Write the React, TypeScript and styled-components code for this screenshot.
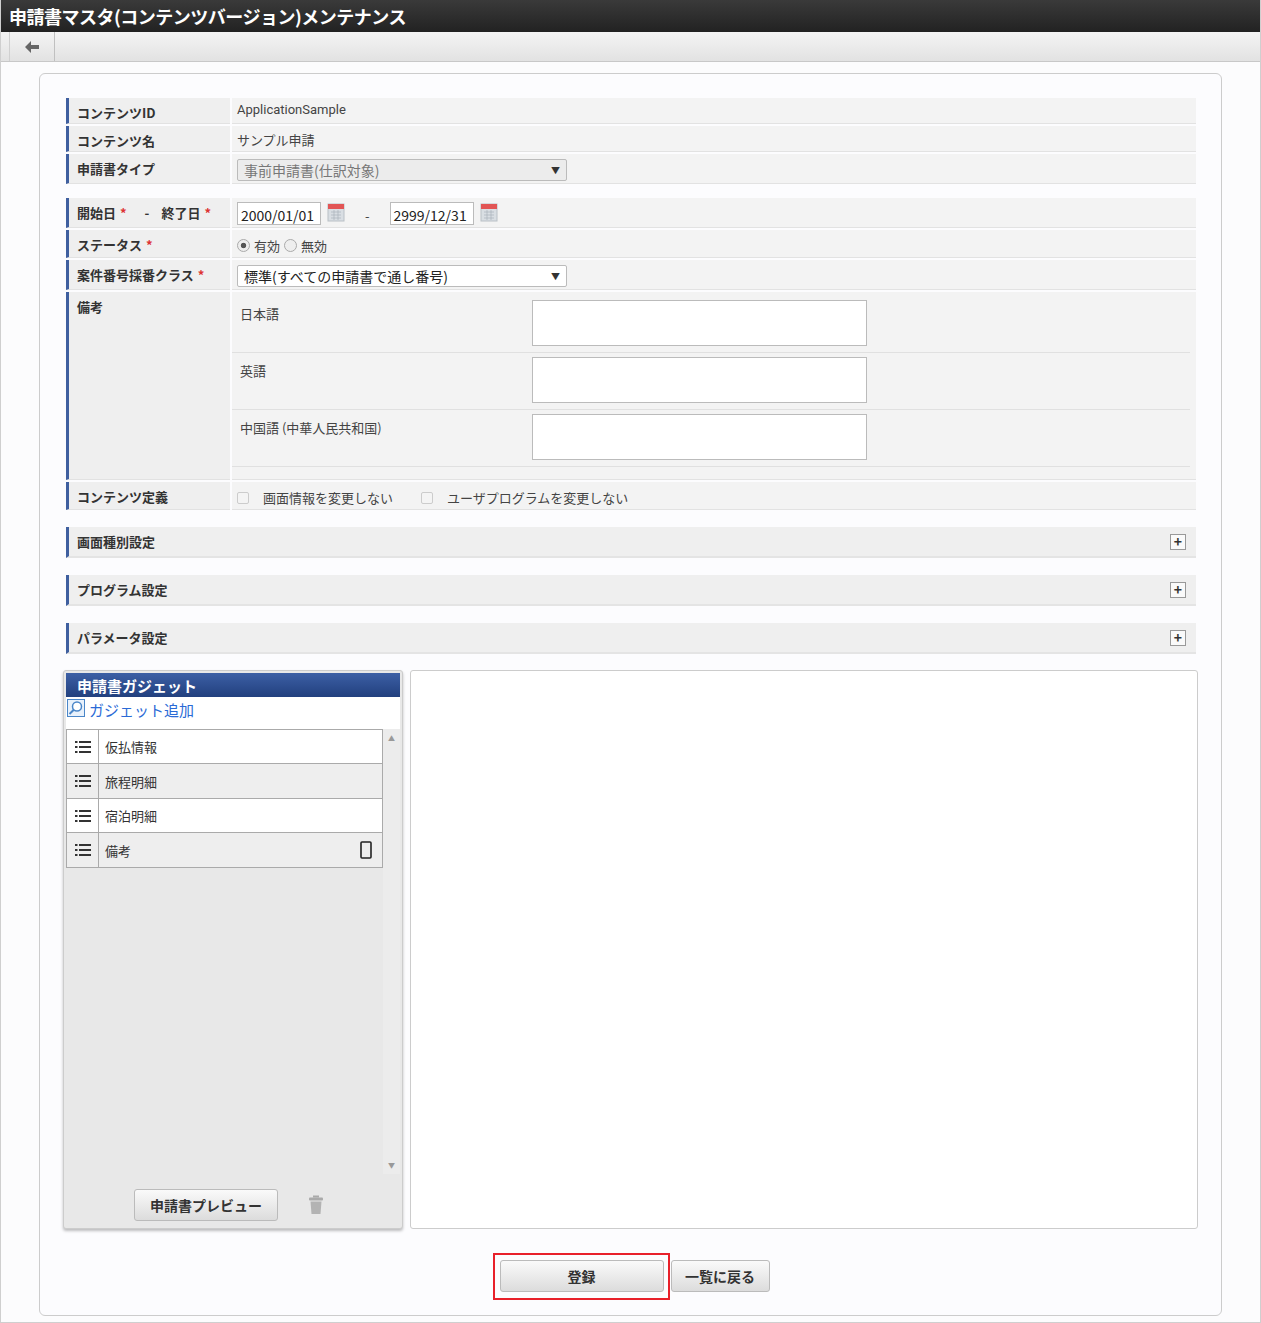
import styled, { createGlobalStyle } from "styled-components";

const Global = createGlobalStyle`
  body { margin: 0; font-family: "Noto Sans CJK JP", "Liberation Sans", sans-serif; font-size: 13px; color: #333; background: #fff; }
`;

const Page = styled.div`
  width: 1261px;
  height: 1323px;
  box-sizing: border-box;
  border: 1px solid #cfcfcf;
  border-top: none;
  background: #fcfcfd;
`;

const TitleBar = styled.div`
  height: 32px;
  background: linear-gradient(#3a3a3a, #222);
  color: #fff;
  font-weight: bold;
  font-size: 18px;
  line-height: 32px;
  padding-left: 8px;
  letter-spacing: -0.5px;
`;

const Toolbar = styled.div`
  height: 29px;
  display: flex;
  background: linear-gradient(#f4f4f4, #e2e2e2);
  border-bottom: 1px solid #c8c8c8;
`;

const BackBtn = styled.div`
  width: 44px;
  margin-left: 8px;
  border-left: 1px solid #d0d0d0;
  border-right: 1px solid #c0c0c0;
  display: flex;
  align-items: center;
  justify-content: center;
  color: #666;
`;

const Card = styled.div`
  margin: 11px 38px 0 38px;
  height: 1243px;
  box-sizing: border-box;
  border: 1px solid #ccc;
  border-radius: 6px;
  background: #fcfcfe;
  padding: 24px 25px 0 26px;
`;

const Table = styled.div`
  display: flex;
  flex-direction: column;
  gap: 2px;
`;

const Row = styled.div<{ h: number }>`
  display: flex;
  height: ${(p) => p.h}px;
  gap: 2px;
`;

const Label = styled.div`
  width: 164px;
  background: #efefef;
  border-left: 3px solid #3f5f9f;
  padding: 5px 0 0 8px;
  font-size: 13px;
  font-weight: bold;
  color: #333;
  box-sizing: border-box;
  border-bottom: 1px solid #e2e2e2;
  flex-shrink: 0;
`;

const Value = styled.div`
  flex: 1;
  background: #f3f3f3;
  border-bottom: 1px solid #e2e2e2;
  padding: 4px 0 0 5px;
  display: flex;
  align-items: flex-start;
  gap: 6px;
  font-size: 13px;
  color: #444;
`;

const Req = styled.span`
  color: #d33;
  margin-left: 4px;
`;

const Select = styled.div<{ disabled?: boolean }>`
  width: 330px;
  height: 22px;
  box-sizing: border-box;
  border: 1px solid #bbb;
  border-radius: 2px;
  background: ${(p) => (p.disabled ? "#ececec" : "#fff")};
  color: ${(p) => (p.disabled ? "#777" : "#222")};
  font-size: 14px;
  padding: 1px 6px;
  display: flex;
  justify-content: space-between;
  align-items: center;
  margin-top: 1px;
  &::after { content: "▼"; font-size: 9px; color: #333; }
`;

const DateInput = styled.div`
  width: 84px;
  height: 23px;
  box-sizing: border-box;
  border: 1px solid #bbb;
  background: #fff;
  font-size: 14px;
  padding: 2px 3px;
  color: #222;
`;

const Cal = () => (
  <svg width="18" height="20" viewBox="0 0 18 20">
    <rect x="1" y="2" width="16" height="17" fill="#d9dee3" stroke="#b9c0c6" />
    <rect x="1" y="2" width="16" height="5" fill="#e25555" />
    <path d="M4 10h10M4 13h10M4 16h10M7 8v10M11 8v10" stroke="#aab2ba" strokeWidth="0.7" />
  </svg>
);

const Dash = styled.span`
  margin: 0 14px;
  padding-top: 4px;
`;

const Radio = styled.span<{ on?: boolean }>`
  display: inline-block;
  width: 11px;
  height: 11px;
  border-radius: 50%;
  border: 1px solid #aaa;
  background: ${(p) => (p.on ? "radial-gradient(#555 30%, #eee 40%)" : "#eee")};
  margin-right: 4px;
  vertical-align: -1px;
`;

const Check = styled.span`
  display: inline-block;
  width: 10px;
  height: 10px;
  border: 1px solid #ccc;
  border-radius: 2px;
  background: #f4f4f4;
  margin-right: 14px;
  vertical-align: -1px;
`;

const NoteBox = styled.div`
  flex: 1;
  display: flex;
  flex-direction: column;
  padding: 4px 6px 0 0;
`;

const NoteRow = styled.div`
  display: flex;
  height: 57px;
  border-bottom: 1px solid #e0e0e0;
  padding: 4px 0 0 8px;
  box-sizing: border-box;
`;

const NoteLabel = styled.div`
  width: 292px;
  padding-top: 4px;
`;

const TextArea = styled.div`
  width: 335px;
  height: 46px;
  box-sizing: border-box;
  border: 1px solid #bbb;
  background: #fff;
`;

const Section = styled.div`
  height: 31px;
  margin-top: 17px;
  background: #efefef;
  border-left: 3px solid #3f5f9f;
  border-bottom: 2px solid #e4e4e4;
  display: flex;
  justify-content: space-between;
  align-items: center;
  padding: 0 10px 0 8px;
  font-weight: bold;
  font-size: 13px;
  box-sizing: border-box;
`;

const Plus = styled.span`
  width: 14px;
  height: 14px;
  border: 1px solid #999;
  background: #fafafa;
  font-size: 14px;
  line-height: 13px;
  text-align: center;
  font-weight: bold;
  color: #333;
`;

const Lower = styled.div`
  display: flex;
  gap: 7px;
  margin-top: 16px;
  margin-left: -3px;
  margin-right: -2px;
  height: 559px;
`;

const Gadget = styled.div`
  width: 340px;
  box-sizing: border-box;
  border: 1px solid #ccc;
  border-radius: 3px;
  background: #e8e8e8;
  box-shadow: 0 2px 3px rgba(0, 0, 0, 0.25);
  display: flex;
  flex-direction: column;
  padding: 2px;
`;

const GadgetHead = styled.div`
  height: 24px;
  background: linear-gradient(#3c5fa5, #22407e);
  color: #fff;
  font-weight: bold;
  font-size: 15px;
  padding-left: 11px;
  line-height: 25px;
`;

const AddLink = styled.div`
  background: #fff;
  color: #2a6ad6;
  font-size: 15px;
  height: 32px;
  display: flex;
  align-items: flex-start;
  gap: 4px;
  padding: 2px 0 0 1px;
  box-sizing: border-box;
`;

const ListArea = styled.div`
  flex: 1;
  display: flex;
`;

const List = styled.div`
  width: 318px;
  display: flex;
  flex-direction: column;
`;

const Item = styled.div<{ alt?: boolean }>`
  height: 35px;
  box-sizing: border-box;
  display: flex;
  border: 1px solid #aaa;
  border-top: ${(p) => (p.alt ? "none" : "1px solid #aaa")};
  margin-top: ${(p) => (p.alt ? "0" : "-1px")};
  background: ${(p) => (p.alt ? "#eeeeee" : "#fff")};
  &:first-child { margin-top: 0; }
`;

const ItemIcon = styled.div`
  width: 31px;
  border-right: 1px solid #aaa;
  display: flex;
  align-items: center;
  justify-content: center;
`;

const ItemText = styled.div`
  flex: 1;
  padding: 0 0 0 6px;
  display: flex;
  align-items: center;
  justify-content: space-between;
  padding-right: 10px;
`;

const Scroll = styled.div`
  width: 17px;
  background: #ececec;
  display: flex;
  flex-direction: column;
  justify-content: space-between;
  align-items: center;
  font-size: 7px;
  color: #999;
  padding: 4px 0;
  margin-bottom: 10px;
`;

const GadgetFoot = styled.div`
  height: 42px;
  display: flex;
  align-items: center;
  gap: 30px;
  padding-left: 68px;
`;

const Btn = styled.div<{ w: number }>`
  width: ${(p) => p.w}px;
  height: 32px;
  box-sizing: border-box;
  border: 1px solid #bbb;
  border-radius: 3px;
  background: linear-gradient(#fafafa, #dcdcdc);
  display: flex;
  align-items: center;
  justify-content: center;
  font-weight: bold;
  font-size: 14px;
  color: #333;
`;

const Preview = styled.div`
  flex: 1;
  border: 1px solid #ccc;
  border-radius: 3px;
  background: #fff;
`;

const Actions = styled.div`
  display: flex;
  justify-content: center;
  margin-top: 24px;
  padding-left: 0px;
`;

const Highlight = styled.div`
  border: 2px solid #e8202a;
  padding: 5px 4px 6px 5px;
`;

const ListIcon = () => (
  <svg width="16" height="14" viewBox="0 0 16 14">
    {[2, 7, 12].map((y) => (
      <g key={y}>
        <rect x="0" y={y - 1} width="2.5" height="2" fill="#333" />
        <rect x="4" y={y - 1} width="12" height="2" fill="#333" />
      </g>
    ))}
  </svg>
);

export default function App() {
  const items = ["仮払情報", "旅程明細", "宿泊明細", "備考"];
  return (
    <>
      <Global />
      <Page>
        <TitleBar>申請書マスタ(コンテンツバージョン)メンテナンス</TitleBar>
        <Toolbar>
          <BackBtn>
            <svg width="14" height="12" viewBox="0 0 14 12">
              <path d="M0 6 L6 0 V4 H14 V8 H6 V12 Z" fill="#666" />
            </svg>
          </BackBtn>
        </Toolbar>
        <Card>
          <Table>
            <Row h={26}>
              <Label>コンテンツID</Label>
              <Value style={{ fontFamily: "Roboto, sans-serif" }}>ApplicationSample</Value>
            </Row>
            <Row h={26}>
              <Label>コンテンツ名</Label>
              <Value>サンプル申請</Value>
            </Row>
            <Row h={30}>
              <Label>申請書タイプ</Label>
              <Value>
                <Select disabled>事前申請書(仕訳対象)</Select>
              </Value>
            </Row>
          </Table>
          <Table style={{ marginTop: 14 }}>
            <Row h={30}>
              <Label>
                開始日<Req>*</Req>
                <Dash style={{ margin: "0 12px 0 18px" }}>-</Dash>
                終了日<Req>*</Req>
              </Label>
              <Value>
                <DateInput>2000/01/01</DateInput>
                <Cal />
                <Dash>-</Dash>
                <DateInput>2999/12/31</DateInput>
                <Cal />
              </Value>
            </Row>
            <Row h={28}>
              <Label>
                ステータス<Req>*</Req>
              </Label>
              <Value style={{ paddingTop: 6 }}>
                <span>
                  <Radio on />
                  有効
                </span>
                <span style={{ marginLeft: -2 }}>
                  <Radio />
                  無効
                </span>
              </Value>
            </Row>
            <Row h={30}>
              <Label>
                案件番号採番クラス<Req>*</Req>
              </Label>
              <Value>
                <Select>標準(すべての申請書で通し番号)</Select>
              </Value>
            </Row>
            <Row h={188}>
              <Label>備考</Label>
              <Value style={{ padding: 0 }}>
                <NoteBox>
                  {["日本語", "英語", "中国語 (中華人民共和国)"].map((l) => (
                    <NoteRow key={l}>
                      <NoteLabel>{l}</NoteLabel>
                      <TextArea />
                    </NoteRow>
                  ))}
                </NoteBox>
              </Value>
            </Row>
            <Row h={28}>
              <Label>コンテンツ定義</Label>
              <Value style={{ paddingTop: 6 }}>
                <span>
                  <Check />
                  画面情報を変更しない
                </span>
                <span style={{ marginLeft: 22 }}>
                  <Check />
                  ユーザプログラムを変更しない
                </span>
              </Value>
            </Row>
          </Table>
          {["画面種別設定", "プログラム設定", "パラメータ設定"].map((s) => (
            <Section key={s}>
              {s}
              <Plus>+</Plus>
            </Section>
          ))}
          <Lower>
            <Gadget>
              <GadgetHead>申請書ガジェット</GadgetHead>
              <AddLink>
                <svg width="18" height="18" viewBox="0 0 18 18">
                  <rect x="0.5" y="0.5" width="17" height="17" fill="#e8f1fb" stroke="#4a86c8" />
                  <circle cx="10" cy="7.5" r="4.5" fill="#fff" stroke="#4a86c8" strokeWidth="1.5" />
                  <path d="M6.8 10.8 L2.5 15" stroke="#4a86c8" strokeWidth="2" />
                </svg>
                ガジェット追加
              </AddLink>
              <ListArea>
                <List>
                  {items.map((it, i) => (
                    <Item key={it} alt={i % 2 === 1}>
                      <ItemIcon>
                        <ListIcon />
                      </ItemIcon>
                      <ItemText>
                        {it}
                        {it === "備考" && (
                          <svg width="12" height="18" viewBox="0 0 12 18">
                            <rect x="1" y="1" width="10" height="16" rx="1" fill="none" stroke="#222" strokeWidth="1.6" />
                          </svg>
                        )}
                      </ItemText>
                    </Item>
                  ))}
                </List>
                <Scroll>
                  <span>▲</span>
                  <span>▼</span>
                </Scroll>
              </ListArea>
              <GadgetFoot>
                <Btn w={144}>申請書プレビュー</Btn>
                <svg width="16" height="20" viewBox="0 0 16 20">
                  <rect x="5" y="0.5" width="6" height="2" fill="#aaa" />
                  <rect x="1" y="2.5" width="14" height="3" rx="1" fill="#aaa" />
                  <path d="M2.5 6.5 H13.5 L12.5 19 H3.5 Z" fill="#b3b3b3" />
                </svg>
              </GadgetFoot>
            </Gadget>
            <Preview />
          </Lower>
          <Actions>
            <Highlight>
              <Btn w={164}>登録</Btn>
            </Highlight>
            <Btn w={99} style={{ marginTop: 7, marginLeft: 1 }}>一覧に戻る</Btn>
          </Actions>
        </Card>
      </Page>
    </>
  );
}
